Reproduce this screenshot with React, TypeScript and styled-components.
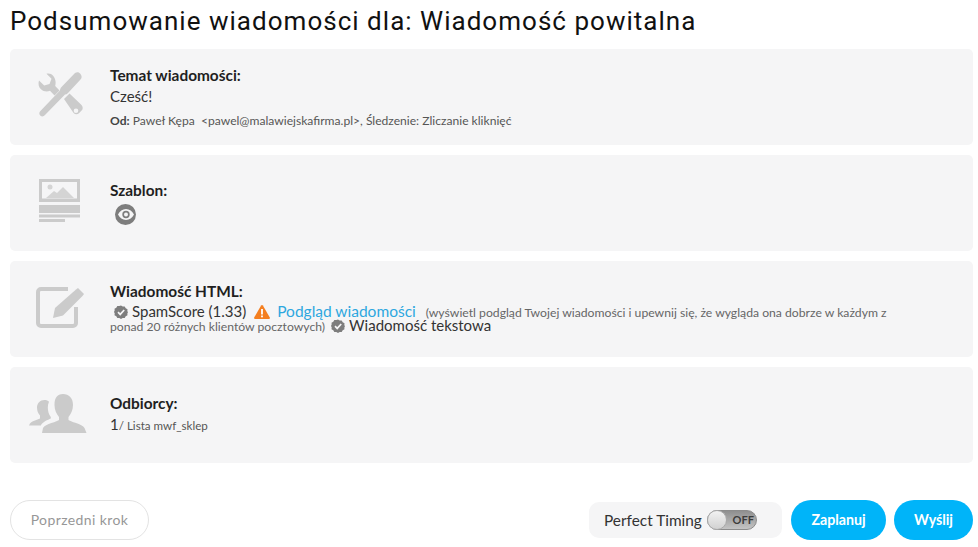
import React from 'react';
import styled, { createGlobalStyle } from 'styled-components';

const GlobalStyle = createGlobalStyle`
    html, body {
        margin: 0;
        padding: 0;
        background: #fff;
        font-family: Lato, "Open Sans", sans-serif;
        color: #333;
    }
`;

const Page = styled.div`
    width: 978px;
    height: 547px;
    box-sizing: border-box;
    padding: 4px 5px 0 10px;
    overflow: hidden;
`;

const Title = styled.h1`
    margin: 0 0 11px;
    height: 34px;
    font-family: Roboto, sans-serif;
    font-weight: 400;
    font-size: 26px;
    line-height: 34px;
    letter-spacing: 1.02px;
    color: #111;
`;

const Cards = styled.div`
    display: flex;
    flex-direction: column;
    gap: 10px;
`;

const Card = styled.section`
    display: grid;
    grid-template-columns: 100px 1fr;
    height: 96px;
    background: #f5f5f6;
    border-radius: 5px;
`;

const IconCell = styled.div`
    display: flex;
    align-items: center;
    justify-content: center;
    padding: 0 1px 5px 0;
`;

const Body = styled.div`
    display: flex;
    flex-direction: column;
    justify-content: center;
    min-width: 0;
`;

const Heading = styled.div`
    font-weight: 700;
    font-size: 15.4px;
    line-height: 19px;
    color: #1f1f1f;
`;

const Plain = styled.div`
    font-size: 15px;
    line-height: 22px;
    color: #333;
`;

const Meta = styled.div`
    font-size: 12.1px;
    line-height: 16px;
    margin-top: 6px;
    color: #555;

    b {
        color: #444;
    }
`;

const ListName = styled.span`
    font-size: 11.6px;
    color: #555;
`;

const EyeBadge = styled.span`
    display: flex;
    align-items: center;
    justify-content: center;
    width: 21px;
    height: 21px;
    margin: 4px 0 0 5px;
    border-radius: 50%;
    background: #7d7d7d;
`;

const MessageLine = styled.div`
    width: 785px;
    margin: 4px 0 3px;
    line-height: 13px;
    font-size: 12.2px;
    color: #666;
`;

const Status = styled.span`
    font-size: 15px;
    color: #333;
`;

const PreviewLink = styled.a`
    font-size: 15.5px;
    color: #2da7df;
    margin: 0 10px 0 3px;
`;

const Glyph = styled.svg<{ $left?: number }>`
    vertical-align: 0;
    margin: -2px 4px -2px ${p => p.$left ?? 0}px;
`;

const Footer = styled.footer`
    display: flex;
    align-items: center;
    justify-content: space-between;
    margin-top: 36px;
    height: 41px;
`;

const BackButton = styled.button`
    width: 139px;
    height: 40px;
    border: 1px solid #e3e3e3;
    border-radius: 20px;
    background: #fff;
    font-family: Lato, sans-serif;
    font-size: 14px;
    letter-spacing: 0.4px;
    color: #979797;
`;

const Actions = styled.div`
    display: flex;
    align-items: center;
    gap: 8px;
`;

const TimingBox = styled.div`
    display: flex;
    align-items: center;
    gap: 5px;
    width: 193px;
    height: 36px;
    box-sizing: border-box;
    margin-right: 1px;
    padding-left: 15px;
    background: #f5f5f6;
    border-radius: 10px;
    font-size: 15.4px;
    color: #333;
`;

const Toggle = styled.span`
    position: relative;
    display: block;
    width: 50px;
    height: 20px;
    box-sizing: border-box;
    border: 1px solid #8c8c8c;
    border-radius: 10px;
    background: linear-gradient(#8f8f8f, #c4c4c4);
    font-size: 11px;
    font-weight: 700;
    line-height: 18px;
    text-align: right;
    padding-right: 2px;
    color: #3c3c3c;
`;

const Knob = styled.span`
    position: absolute;
    left: -1px;
    top: -1px;
    width: 20px;
    height: 20px;
    border-radius: 50%;
    background: linear-gradient(#f2f2f2, #d2d2d2);
    border: 1px solid #aaa;
    box-sizing: border-box;
`;

const PrimaryButton = styled.button<{ $width: number }>`
    width: ${p => p.$width}px;
    height: 40px;
    border: 0;
    border-radius: 20px;
    background: #00b4f9;
    font-family: Lato, sans-serif;
    font-weight: 700;
    font-size: 14.2px;
    color: #fff;
`;

const PeopleSvg = styled.svg`
    margin-right: 3px;
`;

const Check = ({ left }: { left?: number }) => (
    <Glyph $left={left} width="14" height="14" viewBox="0 0 14 14">
        <path
            fill="#7d7d7d"
            d="M7 .5l1.7 1.1 2-.2 1 1.8 1.8 1-.2 2L14 7l-.7 1.7.2 1.6-1.8 1-1 1.8-2-.2L7 14l-1.7-1.1-2 .2-1-1.8-1.8-1 .2-2L0 7l.7-1.7-.2-1.6 1.8-1 1-1.8 2 .2z"
        />
        <path fill="none" stroke="#f5f5f6" strokeWidth="1.7" d="M4 7.2l2.2 2.2L10.2 5" />
    </Glyph>
);

const Warning = () => (
    <Glyph $left={8} width="16" height="14" viewBox="0 0 16 14">
        <path fill="#f47f20" d="M8 0c.4 0 .7.2.9.5l6.9 12c.4.7 0 1.5-.8 1.5H1c-.8 0-1.2-.8-.8-1.5l6.9-12C7.3.2 7.6 0 8 0z" />
        <rect x="7.1" y="4" width="1.8" height="5.5" fill="#fff" />
        <rect x="7.1" y="10.5" width="1.8" height="1.8" fill="#fff" />
    </Glyph>
);

const ToolsIcon = () => (
    <svg width="46" height="46" viewBox="0 0 46 46">
        <path
            fill="#cbcbcb"
            d="M38 1c2-1 4-1 5.5 1s1.500 4 0 5.500L31 21c-1 1-2 1.500-3 1.500L8 43c-1.200 1.500-3 2-4.500.8C2 42.500 2 40.500 3.200 39.200L23 18.500c0-1.200.5-2.500 1.500-3.500z"
        />
        <path
            fill="#cbcbcb"
            d="M14 2c-1.500-.6-3-.8-4.500-.3l5 5-2 5.300-5.300 1.500L2 8.500C1 11.500 1.500 15 4 17.300c2.500 2.300 6 2.700 9 1.500l4.500 4.700 5-5-4.300-4.500c1.300-4.500-.2-9.500-4.200-12z"
        />
        <path
            fill="#cbcbcb"
            fillRule="evenodd"
            d="M27 27l5.500-5.500 12 11.500c1.600 1.700 1.600 4 .1 5.600l-2.400 2.500c-1.700 1.700-4 1.600-5.600 0zm12 9.500a2.300 2.300 0 1 0 0 4.600 2.300 2.300 0 0 0 0-4.600z"
        />
    </svg>
);

const TemplateIcon = () => (
    <svg width="41" height="43" viewBox="0 0 41 43">
        <path
            fill="#cbcbcb"
            fillRule="evenodd"
            d="M0 0h41v23H0zM3 3v16.500h35V3zM0 26h41v8H0zM0 35.500h41v3H0zM0 40h26v3H0z"
        />
        <path fill="#d4d4d4" d="M7 19l8-7 3 2 6-6 11 11z" />
        <circle cx="11" cy="8" r="2.500" fill="#d4d4d4" />
    </svg>
);

const EditIcon = () => (
    <svg width="48" height="42" viewBox="0 0 48 42">
        <path
            fill="none"
            stroke="#cbcbcb"
            strokeWidth="4"
            strokeLinejoin="round"
            d="M32 3H5a3 3 0 0 0-3 3V37a3 3 0 0 0 3 3h32a3 3 0 0 0 3-3V21"
        />
        <path fill="#cbcbcb" d="M17 32l2-10L40 3.500l2-1.500 6 6-1.500 2L27 29.500z" />
    </svg>
);

const PeopleIcon = () => (
    <PeopleSvg width="58" height="40" viewBox="0 0 58 40">
        <path
            fill="#cbcbcb"
            d="M34 1c6 0 10 4 10 11 0 5-2 9-4.500 12v3c1 1.500 14 4 16 8l2 5H13l1-5c2-4 15-6.500 16-8v-3c-2.500-3-4.500-7-4.500-12C25.500 5 28 1 34 1z"
        />
        <path
            fill="#cbcbcb"
            d="M15.500 7c2 0 3.500.6 4.500 1.800-.8 1.700-1.200 3.700-1.200 5.700 0 3.500 1 7 3 9.500v1.500c-3 1.500-8 3-10 7H0c1-3 3-4 6-5l5-2v-3c-2-2-3-5-3-8 0-4 3-7.500 7.500-7.500z"
        />
    </PeopleSvg>
);

const EyeIcon = () => (
    <svg width="16" height="11" viewBox="0 0 16 11">
        <path fill="#f5f5f6" fillRule="evenodd" d="M8 0c3.500 0 6.300 2.300 8 5.500C14.300 8.700 11.500 11 8 11S1.700 8.700 0 5.500C1.700 2.300 4.500 0 8 0zm0 1.800a3.700 3.700 0 1 0 0 7.400 3.700 3.700 0 0 0 0-7.400z" />
        <circle cx="8" cy="5.500" r="2" fill="#f5f5f6" />
    </svg>
);

export default function App() {
    return (
        <Page>
            <GlobalStyle />
            <Title>Podsumowanie wiadomości dla: Wiadomość powitalna</Title>
            <Cards>
                <Card>
                    <IconCell><ToolsIcon /></IconCell>
                    <Body>
                        <Heading>Temat wiadomości:</Heading>
                        <Plain>Cześć!</Plain>
                        <Meta>
                            <b>Od:</b> Paweł Kępa &nbsp;&lt;pawel@malawiejskafirma.pl&gt;, Śledzenie: Zliczanie kliknięć
                        </Meta>
                    </Body>
                </Card>
                <Card>
                    <IconCell><TemplateIcon /></IconCell>
                    <Body>
                        <Heading>Szablon:</Heading>
                        <EyeBadge><EyeIcon /></EyeBadge>
                    </Body>
                </Card>
                <Card>
                    <IconCell><EditIcon /></IconCell>
                    <Body>
                        <Heading>Wiadomość HTML:</Heading>
                        <MessageLine>
                            <Check left={4} />
                            <Status>SpamScore (1.33)</Status>
                            <Warning />
                            <PreviewLink>Podgląd wiadomości</PreviewLink>
                            (wyświetl podgląd Twojej wiadomości i upewnij się, że wygląda ona dobrze w każdym z ponad 20 różnych klientów pocztowych)
                            <Check left={6} />
                            <Status>Wiadomość tekstowa</Status>
                        </MessageLine>
                    </Body>
                </Card>
                <Card>
                    <IconCell><PeopleIcon /></IconCell>
                    <Body>
                        <Heading>Odbiorcy:</Heading>
                        <Plain>1<ListName>/ Lista mwf_sklep</ListName></Plain>
                    </Body>
                </Card>
            </Cards>
            <Footer>
                <BackButton>Poprzedni krok</BackButton>
                <Actions>
                    <TimingBox>
                        Perfect Timing
                        <Toggle>OFF<Knob /></Toggle>
                    </TimingBox>
                    <PrimaryButton $width={95}>Zaplanuj</PrimaryButton>
                    <PrimaryButton $width={79}>Wyślij</PrimaryButton>
                </Actions>
            </Footer>
        </Page>
    );
}
